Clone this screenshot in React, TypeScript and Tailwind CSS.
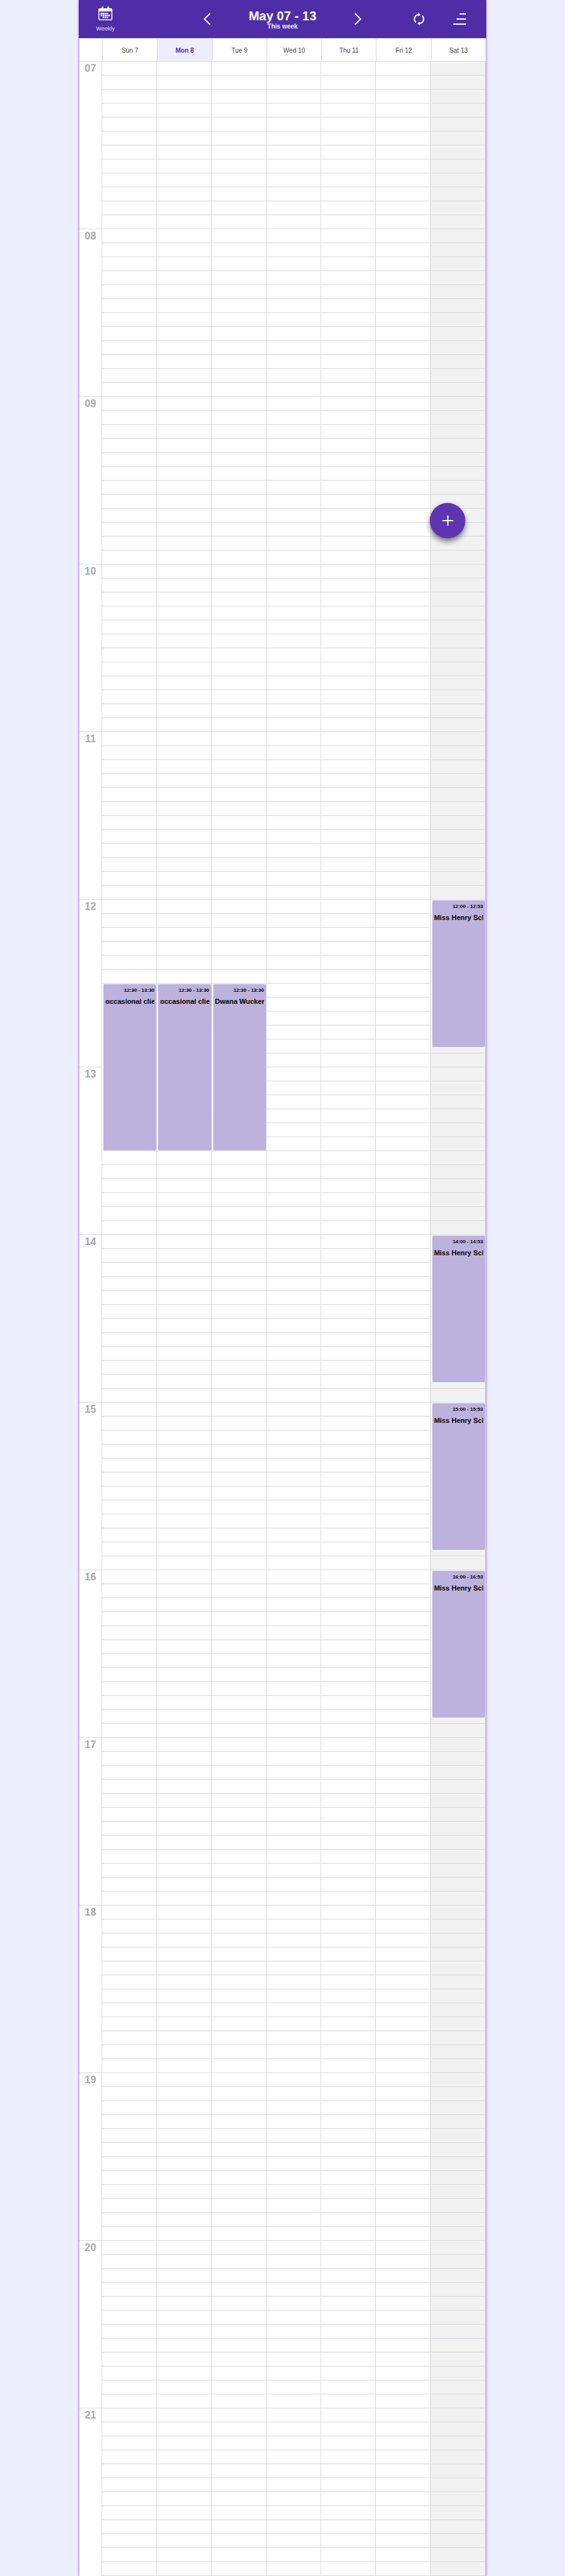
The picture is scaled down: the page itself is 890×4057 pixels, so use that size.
const days = ["Sun 7", "Mon 8", "Tue 9", "Wed 10", "Thu 11", "Fri 12", "Sat 13"];
const hours = Array.from({ length: 15 }, (_, i) => i + 7);

type Booking = { day: number; start: string; end: string; client: string };

const bookings: Booking[] = [
  { day: 0, start: "12:30", end: "13:30", client: "occasional client" },
  { day: 1, start: "12:30", end: "13:30", client: "occasional client" },
  { day: 2, start: "12:30", end: "13:30", client: "Dwana Wuckert" },
  { day: 6, start: "12:00", end: "12:53", client: "Miss Henry Schmidt" },
  { day: 6, start: "14:00", end: "14:53", client: "Miss Henry Schmidt" },
  { day: 6, start: "15:00", end: "15:53", client: "Miss Henry Schmidt" },
  { day: 6, start: "16:00", end: "16:53", client: "Miss Henry Schmidt" },
];

const HOUR_HEIGHT = 264;

function offset(time: string) {
  const [h, m] = time.split(":").map(Number);
  return Math.round(((h - 7) * 60 + m) * (HOUR_HEIGHT / 60));
}

function Event({ booking }: { booking: Booking }) {
  const top = offset(booking.start);
  return (
    <article
      className="absolute inset-x-0 overflow-hidden rounded-[3px] border-y border-l-2 border-[#f7faff] bg-[#bdb2de] px-[3px] font-bold text-black"
      style={{ top: top + 1, height: offset(booking.end) - top }}
    >
      <p className="mt-1 text-right text-[8px] leading-3 whitespace-nowrap">
        {booking.start} - {booking.end}
      </p>
      <p className="mt-1 overflow-hidden text-[11px] leading-[14px] whitespace-nowrap">{booking.client}</p>
    </article>
  );
}

function CalendarIcon() {
  return (
    <svg width="22" height="22" viewBox="0 0 22 22" aria-hidden="true">
      <path
        d="M2 3h3V1.500a1.500 1.500 0 0 1 3 0V3h6V1.500a1.500 1.500 0 0 1 3 0V3h3a2 2 0 0 1 2 2v15a2 2 0 0 1-2 2H2a2 2 0 0 1-2-2V5a2 2 0 0 1 2-2Z"
        fill="white"
      />
      <path d="M1.500 8h19v11.500a1 1 0 0 1-1 1h-17a1 1 0 0 1-1-1Z" fill="#4f2da7" />
      <path
        d="M6.600 10h2.400v2.400H6.600zM9.700 10h2.400v2.400H9.700zM12.800 10h2.400v2.400h-2.400zM3.500 10h2.400v2.400H3.500zM3.500 13.100h2.400v2.400H3.500zM6.600 13.100h2.400v2.400H6.600zM9.700 13.100h2.400v2.400H9.700zM12.800 13.100h2.400v2.400h-2.400zM15.900 13.100h2.400v2.400h-2.400zM6.600 16.200h2.400v2.400H6.600zM9.700 16.200h2.400v2.400H9.700zM12.800 16.200h2.400v2.400h-2.400z"
        fill="white"
      />
    </svg>
  );
}

export default function App() {
  return (
    <div className="bg-[#efeeff] px-[124px] font-['Liberation_Sans',sans-serif]">
      <div className="relative shadow-[0_0_3px_#9b7ee0]">
        <header className="flex h-[60px] items-center bg-[#4f2da7] text-white">
          <button className="ml-[26px] flex w-8 flex-col items-center gap-2 text-[9px]">
            <CalendarIcon />
            <span className="leading-[10px] text-[#e6e0fa]">Weekly</span>
          </button>
          <div className="ml-auto flex items-center">
            <button aria-label="Previous week">
              <svg width="12" height="20" viewBox="0 0 12 20" fill="none" stroke="#f3f0ff" strokeWidth="2" aria-hidden="true">
                <path d="M11 1 2 10l9 9" />
              </svg>
            </button>
            <div className="w-[226px] pt-0.5 text-center font-bold">
              <h1 className="text-[20px] leading-[22px]">May 07 - 13</h1>
              <p className="text-[10px] leading-3 text-[#f0ecff]">This week</p>
            </div>
            <button aria-label="Next week">
              <svg width="12" height="20" viewBox="0 0 12 20" fill="none" stroke="#f3f0ff" strokeWidth="2" aria-hidden="true">
                <path d="m1 1 9 9-9 9" />
              </svg>
            </button>
          </div>
          <button className="ml-[81px]" aria-label="Refresh">
            <svg width="18" height="20" viewBox="0 0 18 20" fill="none" stroke="white" strokeWidth="2" aria-hidden="true">
              <path d="M4.200 15.200A6.800 6.800 0 0 1 8.500 3.200M13.800 4.800A6.800 6.800 0 0 1 9.500 16.800" />
              <path d="M8 0v6l3.500-3ZM10 14v6l-3.500-3Z" fill="white" stroke="none" />
            </svg>
          </button>
          <button className="mr-8 ml-[45px]" aria-label="Menu">
            <svg width="20" height="18" viewBox="0 0 20 18" fill="white" aria-hidden="true">
              <path d="M10 0h10v2H10zM5 8h15v2H5zM0 16h20v2H0z" />
            </svg>
          </button>
        </header>

        <main className="border-x border-[#b9a5ec] bg-white">
          <div className="flex h-9 border-t border-[#dadade] pl-9 text-[10px] text-[#444]">
            {days.map((day, i) => (
              <div
                key={day}
                className={
                  i === 1
                    ? "flex flex-1 items-center justify-center border-l border-[#dadade] bg-[#efeeff] pt-0.5 font-bold text-[#4f2da7]"
                    : "flex flex-1 items-center justify-center border-l border-[#dadade] pt-0.5"
                }
              >
                {day}
              </div>
            ))}
          </div>

          <div className="flex">
            <div className="w-[35px] shrink-0">
              {hours.map((hour) => (
                <div key={hour} className="h-[264px] border-t border-[#dadade] pt-px text-center text-[16px] leading-5 font-bold text-[#a9a9a9]">
                  {String(hour).padStart(2, "0")}
                </div>
              ))}
            </div>
            <div className="flex flex-1 border-r border-[#dadade]">
              {days.map((day, i) => (
                <div
                  key={day}
                  className={
                    i === 6
                      ? "relative flex-1 border-b border-l border-[#dadade] bg-[#f2f2f2]"
                      : "relative flex-1 border-b border-l border-[#dadade]"
                  }
                >
                  {Array.from({ length: 180 }, (_, row) => (
                    <div key={row} className="h-[22px] border-t border-[#dadade]" />
                  ))}
                  {bookings
                    .filter((b) => b.day === i)
                    .map((b) => (
                      <Event key={b.start} booking={b} />
                    ))}
                </div>
              ))}
            </div>
          </div>
        </main>

        <button
          aria-label="Add booking"
          className="absolute top-[792px] right-[33px] flex size-14 items-center justify-center rounded-full bg-[#5e35b1] shadow-[0_5px_8px_rgba(0,0,0,0.5)]"
        >
          <svg width="17" height="16" viewBox="0 0 17 16" fill="white" aria-hidden="true">
            <path d="M7.500 0h2v7H17v2H9.500v7h-2V9H0V7h7.500Z" />
          </svg>
        </button>
      </div>
    </div>
  );
}
